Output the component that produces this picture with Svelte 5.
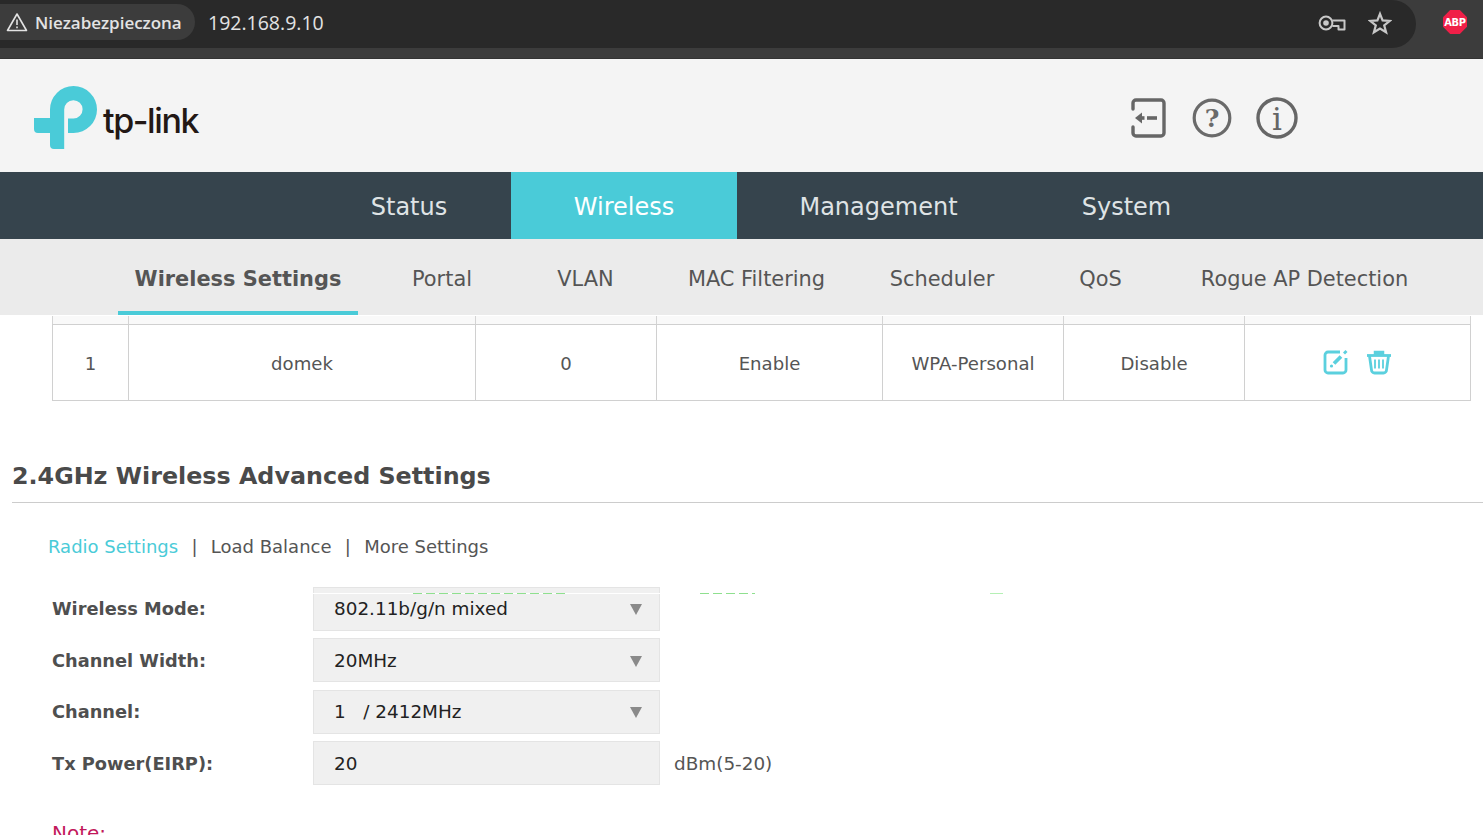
<script>
  const tabs = ['Wireless Settings', 'Portal', 'VLAN', 'MAC Filtering', 'Scheduler', 'QoS', 'Rogue AP Detection'];
  const cells = ['1', 'domek', '0', 'Enable', 'WPA-Personal', 'Disable'];
  const fields = [
    { label: 'Wireless Mode:', value: '802.11b/g/n mixed', select: true },
    { label: 'Channel Width:', value: '20MHz', select: true },
    { label: 'Channel:', value: '1\u00a0\u00a0 / 2412MHz', select: true },
    { label: 'Tx Power(EIRP):', value: '20', select: false, unit: 'dBm(5-20)' }
  ];
</script>

<div class="page">
  <div class="chrome">
    <div class="omnibox">
      <div class="pill">
        <svg class="warn" width="22" height="20" viewBox="0 0 22 20" fill="none" stroke="#e3e3e3" stroke-width="1.6" stroke-linejoin="round">
          <path d="M11 2 L20.5 18.5 H1.5 Z" />
          <path d="M11 7.5 V13 M11 14.5 V16.2" />
        </svg>
        <span>Niezabezpieczona</span>
      </div>
      <span class="url">192.168.9.10</span>
      <div class="omni-icons">
        <svg width="28" height="18" viewBox="0 0 28 18" fill="none" stroke="#c8c8c8" stroke-width="2" stroke-linejoin="round">
          <circle cx="8" cy="9" r="6.4" />
          <circle cx="8" cy="9" r="2.8" fill="#c8c8c8" stroke="none" />
          <path d="M14.4 6.5 H26.5 V15.5 H20.5 V12 H14.4" />
        </svg>
        <svg width="24" height="24" viewBox="0 0 24 24" fill="none" stroke="#c8c8c8" stroke-width="2.2" stroke-linejoin="miter">
          <path d="M12 2.8 L14.6 9.4 L21.8 9.9 L16.2 14.4 L18.1 21.3 L12 17.5 L5.9 21.3 L7.8 14.4 L2.2 9.9 L9.4 9.4 Z" />
        </svg>
      </div>
    </div>
    <div class="abp"><span>ABP</span></div>
  </div>

  <header class="head">
    <div class="logo">
      <svg width="64" height="64" viewBox="34 86 64 64">
        <path fill="#4acbd8" fill-rule="evenodd" d="M50 118 V109.5 A23.5 23.5 0 1 1 73.5 133 H68 V118.6 H73.5 A9.2 9.2 0 1 0 64.2 109.5 V149 H54 A4 4 0 0 1 50 145 V133 H38 A4 4 0 0 1 34 129 V118 Z" />
      </svg>
      <span class="word">tp-link</span>
    </div>
    <div class="head-icons">
      <svg width="36" height="40" viewBox="0 0 36 40" fill="none" stroke="#666" stroke-width="3.4">
        <path d="M3 11 V5 A3 3 0 0 1 6 2 H31 A3 3 0 0 1 34 5 V35 A3 3 0 0 1 31 38 H6 A3 3 0 0 1 3 35 V29" stroke-linecap="round" />
        <path d="M17 20 H27" stroke-width="3.6" />
        <path d="M5 20 L12 14.5 V25.5 Z" fill="#666" stroke="none" />
        <path d="M11 20 H14.5" stroke-width="3.6" />
      </svg>
      <svg width="40" height="40" viewBox="0 0 40 40" fill="none" stroke="#6a6a6a" stroke-width="3.2">
        <circle cx="20" cy="20" r="17.8" />
        <text x="20" y="28.5" text-anchor="middle" class="glyph-q">?</text>
      </svg>
      <svg class="info" width="42" height="42" viewBox="0 0 42 42" fill="none" stroke="#666" stroke-width="3.4">
        <circle cx="21" cy="21" r="19" />
        <text x="21" y="33" text-anchor="middle" class="glyph-i">i</text>
      </svg>
    </div>
  </header>

  <nav class="main-nav">
    <a>Status</a>
    <a class="on">Wireless</a>
    <a>Management</a>
    <a>System</a>
  </nav>

  <nav class="sub-nav">
    {#each tabs as t, i}
      <a class:on={i === 0}>{t}</a>
    {/each}
  </nav>

  <div class="content">
    <div class="table">
      <div class="thead">
        {#each Array(7) as _}<div></div>{/each}
      </div>
      <div class="trow">
        {#each cells as c}<div class="cell">{c}</div>{/each}
        <div class="cell actions">
          <svg width="26" height="26" viewBox="0 0 26 26" fill="none" stroke="#5bd0de" stroke-width="2.8">
            <path d="M17 3 H5 A3 3 0 0 0 2 6 V21 A3 3 0 0 0 5 24 H20 A3 3 0 0 0 23 21 V9" />
            <path d="M11 14.5 L18 7.5" stroke-width="3.8" />
            <path d="M21 4.5 L23.5 2" stroke-width="2.8" />
            <circle cx="8.5" cy="17" r="1.6" fill="#5bd0de" stroke="none" />
          </svg>
          <svg width="26" height="26" viewBox="0 0 26 26" fill="none" stroke="#5bd0de" stroke-width="2.8">
            <path d="M1 6.5 H25" />
            <path d="M8.5 5.5 V2.5 H17.5 V5.5 Z" fill="#5bd0de" stroke-width="1.5" />
            <path d="M3.5 7 L5.5 21 A3 3 0 0 0 8.5 24 H17.5 A3 3 0 0 0 20.5 21 L22.5 7" />
            <path d="M9 10.5 V19.5 M13 10.5 V19.5 M17 10.5 V19.5" stroke-width="1.8" />
          </svg>
        </div>
      </div>
    </div>

    <h2>2.4GHz Wireless Advanced Settings</h2>

    <div class="links">
      <a class="on">Radio Settings</a>
      <i>|</i>
      <a>Load Balance</a>
      <i>|</i>
      <a>More Settings</a>
    </div>

    <div class="form">
      {#each fields as f}
        <div class="label">{f.label}</div>
        <div class="box">
          <span>{f.value}</span>
          {#if f.select}<b class="caret"></b>{/if}
        </div>
        <div class="unit">{f.unit ?? ''}</div>
      {/each}
      <div class="ghost"></div>
      <div class="bit b1"></div>
      <div class="bit b2"></div>
      <div class="bit b3"></div>
    </div>

    <div class="note">Note:</div>
  </div>
</div>

<style>
  :global(body) {
    margin: 0;
    background: #fff;
  }
  .page {
    width: 1483px;
    height: 835px;
    overflow: hidden;
    font-family: "DejaVu Sans", Verdana, sans-serif;
    color: #555;
  }
  .chrome {
    height: 59px;
    box-sizing: border-box;
    background: #3c3c3c;
    border-bottom: 1px solid #333;
    display: flex;
    align-items: flex-start;
  }
  .omnibox {
    width: 1416px;
    height: 48px;
    background: #292929;
    border-radius: 0 24px 24px 0;
    display: flex;
    align-items: center;
    font-family: "Open Sans", "Noto Sans", sans-serif;
    box-sizing: border-box;
  }
  .pill {
    width: 195px;
    height: 36px;
    margin-top: -4px;
    background: #3c3c3c;
    border-radius: 0 18px 18px 0;
    display: flex;
    align-items: center;
    gap: 7px;
    padding-left: 6px;
    box-sizing: border-box;
    color: #e3e3e3;
    font-size: 17px;
    font-weight: 600;
    letter-spacing: -0.03px;
    white-space: nowrap;
  }
  .url {
    margin-left: 13px;
    margin-top: -4px;
    font-size: 19.5px;
    color: #e3e3e3;
  }
  .omni-icons {
    margin-left: auto;
    margin-right: 24px;
    margin-top: -3px;
    display: flex;
    align-items: center;
    gap: 22px;
  }
  .abp {
    width: 24px;
    height: 24px;
    margin: 10px 0 0 27px;
    background: #f01f48;
    clip-path: polygon(30% 0, 70% 0, 100% 30%, 100% 70%, 70% 100%, 30% 100%, 0 70%, 0 30%);
    display: flex;
    align-items: center;
    justify-content: center;
  }
  .abp span {
    font-family: "DejaVu Sans Condensed", "DejaVu Sans", sans-serif;
    font-stretch: condensed;
    font-weight: 700;
    font-size: 11px;
    letter-spacing: -0.3px;
    color: #fff;
  }
  .head {
    height: 113px;
    box-sizing: border-box;
    background: #f4f4f4;
    display: flex;
    align-items: flex-start;
    justify-content: space-between;
    padding: 27px 185px 0 34px;
  }
  .logo {
    display: flex;
    position: relative;
    width: 170px;
  }
  .word {
    font-family: "Inter", sans-serif;
    color: #231815;
    font-size: 34px;
    font-weight: 500;
    letter-spacing: -1.4px;
    line-height: 40px;
    margin: 15px 0 0 5px;
  }
  .head-icons {
    display: flex;
    align-items: center;
    gap: 26px;
    margin-top: 11px;
    height: 42px;
  }
  .info { margin-left: -2px; }
  .glyph-q {
    font-family: "DejaVu Serif", serif;
    font-size: 25px;
    font-weight: 700;
    fill: #6a6a6a;
    stroke: none;
  }
  .glyph-i {
    font-family: "DejaVu Serif", serif;
    font-size: 31px;
    fill: #666;
    stroke: none;
  }
  .main-nav {
    height: 67px;
    background: #36444d;
    display: grid;
    grid-template-columns: 204px 226px 283px 213px;
    padding-left: 307px;
    font-size: 24px;
  }
  .main-nav a {
    text-align: center;
    line-height: 70px;
    height: 67px;
    color: #dfe3e5;
  }
  .main-nav a.on {
    background: #4acbd8;
    color: #fff;
  }
  .sub-nav {
    height: 76px;
    box-sizing: border-box;
    background: #ebebeb;
    padding-left: 118px;
    display: grid;
    grid-template-columns: 240px 168px 119px 223px 148px 169px 239px;
    font-size: 20.9px;
    color: #555;
  }
  .sub-nav a {
    text-align: center;
    line-height: 81px;
    height: 76px;
    white-space: nowrap;
  }
  .sub-nav a.on {
    font-weight: 700;
    border-bottom: 4px solid #4acbd8;
    height: 72px;
  }
  .content {
    padding-top: 1px;
    position: relative;
  }
  .table {
    margin-left: 52px;
    width: 1419px;
    box-sizing: border-box;
    font-size: 18.1px;
    text-align: center;
  }
  .thead, .trow {
    display: grid;
    grid-template-columns: 76px 347px 181px 226px 181px 181px 227px;
  }
  .thead {
    height: 9px;
    box-sizing: border-box;
    background: #f9f9f9;
    border-bottom: 1px solid #d0d0d0;
  }
  .thead div {
    border-left: 1px solid #d4d4d4;
  }
  .thead div:last-child {
    border-right: 1px solid #d4d4d4;
  }
  .trow {
    height: 76px;
    box-sizing: border-box;
    border-bottom: 1px solid #d0d0d0;
  }
  .cell {
    border-left: 1px solid #d0d0d0;
    display: flex;
    align-items: center;
    justify-content: center;
    padding-top: 2px;
  }
  .cell:last-child { border-right: 1px solid #d0d0d0; }
  .actions {
    gap: 17px;
    padding: 0 0 2px 0;
  }
  h2 {
    margin: 58px 0 0 12px;
    font-size: 23.8px;
    line-height: 34px;
    font-weight: 700;
    color: #4a4a4a;
    padding-bottom: 9px;
    border-bottom: 1px solid #ccc;
  }
  .links {
    margin: 31px 0 0 48px;
    font-size: 18px;
    line-height: 26px;
    display: flex;
    gap: 13.3px;
  }
  .links a.on { color: #4acbd8; }
  .links i { font-style: normal; }
  .form {
    position: relative;
    margin: 26.7px 0 0 52px;
    display: grid;
    grid-template-columns: 261px 347px auto;
    grid-auto-rows: 44px;
    row-gap: 7.5px;
    font-size: 18.4px;
    align-items: center;
  }
  .label {
    font-weight: 700;
    font-size: 17.8px;
    color: #4f4f4f;
    white-space: nowrap;
  }
  .box {
    height: 44px;
    box-sizing: border-box;
    background: #f0f0f0;
    border: 1px solid #e4e4e4;
    padding: 0 20px;
    display: flex;
    align-items: center;
    justify-content: space-between;
    color: #222;
  }
  .caret {
    width: 0;
    height: 0;
    margin: 2px -3px 0 0;
    border-left: 6px solid transparent;
    border-right: 6px solid transparent;
    border-top: 11px solid #8a8a8a;
  }
  .unit {
    padding-left: 14px;
    color: #555;
  }
  .ghost {
    position: absolute;
    left: 261px;
    top: 6px;
    width: 708px;
    height: 1px;
    background: #fff;
  }
  .bit {
    position: absolute;
    top: 6px;
    height: 1px;
    background: repeating-linear-gradient(90deg, #8fe08f 0 9px, #fff 9px 13px);
  }
  .b1 { left: 361px; width: 152px; }
  .b2 { left: 648px; width: 55px; }
  .b3 { left: 938px; width: 13px; background: #b5f0b5; }
  .note {
    margin: 36px 0 0 52px;
    font-size: 20px;
    color: #c2185b;
  }
</style>
